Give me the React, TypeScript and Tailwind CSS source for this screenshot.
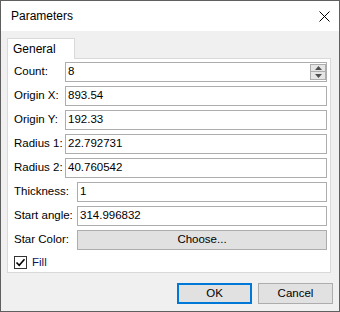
const fields: { label: string; value: string; wide?: boolean; spin?: boolean }[] = [
  { label: "Count:", value: "8", spin: true },
  { label: "Origin X:", value: "893.54" },
  { label: "Origin Y:", value: "192.33" },
  { label: "Radius 1:", value: "22.792731" },
  { label: "Radius 2:", value: "40.760542" },
  { label: "Thickness:", value: "1", wide: true },
  { label: "Start angle:", value: "314.996832", wide: true },
];

function SpinBox() {
  return (
    <div className="absolute right-0 top-[1px] flex flex-col">
      <div className="w-[16px] h-[8px] border border-[#adadad] bg-[#e5e5e5] flex items-center justify-center">
        <svg width="7" height="4" viewBox="0 0 7 4">
          <polygon points="3.5,0 7,4 0,4" fill="#505050" />
        </svg>
      </div>
      <div className="w-[16px] h-[8px] border border-[#adadad] border-t-0 bg-[#e5e5e5] flex items-center justify-center">
        <svg width="7" height="4" viewBox="0 0 7 4">
          <polygon points="0,0 7,0 3.5,4" fill="#505050" />
        </svg>
      </div>
    </div>
  );
}

export default function App() {
  return (
    <div className="w-[340px] h-[312px] border border-[#5f5f5f] bg-[#f0f0f0] flex flex-col font-['Liberation_Sans',Arial,sans-serif] text-[11.5px] text-black">
      {/* title bar */}
      <div className="h-[30px] bg-white flex items-center justify-between pl-[10px] pr-[9px]">
        <span className="text-[12px]">Parameters</span>
        <svg width="11" height="11" viewBox="0 0 11 11">
          <path d="M0.5 0.5 L10.5 10.5 M10.5 0.5 L0.5 10.5" stroke="#000" strokeWidth="1" />
        </svg>
      </div>

      <div className="flex-1 flex flex-col pl-[6px] pr-[8px] pt-[7px]">
        {/* tab header */}
        <div className="self-start w-[68px] h-[21px] border border-b-0 border-[#d9d9d9] bg-white -mb-px relative z-10 flex items-center pl-[5px] text-[12px]">
          General
        </div>

        {/* tab panel */}
        <div className="border border-[#d9d9d9] bg-white pt-[3px] pl-[6px] pr-[3px] pb-[3px] flex flex-col gap-[4px]">
          {fields.map((f) => (
            <div key={f.label} className="flex items-center h-[20px]">
              <span className={f.wide ? "w-[63px] shrink-0" : "w-[51px] shrink-0"}>{f.label}</span>
              <div className="relative flex-1 h-[20px] border border-[#adadad] bg-white flex items-center pl-[2px]">
                {f.value}
                {f.spin && <SpinBox />}
              </div>
            </div>
          ))}
          <div className="flex items-center h-[20px]">
            <span className="w-[63px] shrink-0">Star Color:</span>
            <div className="flex-1 h-[20px] border border-[#adadad] bg-[#e1e1e1] flex items-center justify-center">
              Choose...
            </div>
          </div>
          <div className="flex items-center h-[13px] mt-[2px] gap-[5px]">
            <div className="w-[13px] h-[13px] border border-[#333333] bg-white flex items-center justify-center">
              <svg width="11" height="11" viewBox="0 0 11 11">
                <path d="M1.5 5.5 L4.2 8.3 L9.5 2.2" stroke="#000" strokeWidth="1.6" fill="none" />
              </svg>
            </div>
            <span className="text-[#14145a]">Fill</span>
          </div>
        </div>

        {/* footer */}
        <div className="flex justify-end gap-[6px] mt-[10px] mr-[-2px]">
          <div className="w-[75px] h-[21px] border-2 border-[#0078d7] bg-[#e1e1e1] flex items-center justify-center">
            OK
          </div>
          <div className="w-[75px] h-[21px] border border-[#adadad] bg-[#e1e1e1] flex items-center justify-center">
            Cancel
          </div>
        </div>
      </div>
    </div>
  );
}
